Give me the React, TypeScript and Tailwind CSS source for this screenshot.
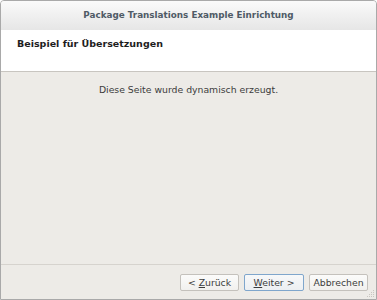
export default function App() {
  return (
    <div
      className="flex h-[300px] w-[377px] flex-col overflow-hidden rounded-t-[4px] border border-[#a9a9a9] bg-[#edebe7] text-[9.3px] text-[#2e3436]"
      style={{ fontFamily: '"DejaVu Sans", sans-serif' }}
    >
      {/* title bar */}
      <div className="flex h-[29px] shrink-0 items-center justify-center bg-gradient-to-b from-[#fafafa] to-[#e6e6e6] text-[8.8px] font-bold text-[#4f5b66]">
        Package Translations Example Einrichtung
      </div>
      {/* page header */}
      <div className="h-[42px] shrink-0 border-b border-[#c8c5c0] bg-white px-[16px] pt-[7px] text-[9.5px] font-bold text-[#1e1e1e]">
        Beispiel für Übersetzungen
      </div>
      {/* page body */}
      <div className="flex-1 pt-[11px] text-center text-[#3c3c3c]">
        Diese Seite wurde dynamisch erzeugt.
      </div>
      {/* buttons */}
      <div className="relative flex h-[35px] shrink-0 items-start justify-end gap-[5px] border-t border-[#d6d3ce] pt-[9px] pr-[8px]">
        <button className="h-[17px] w-[59px] rounded-[2px] border border-[#c4c1bc] bg-gradient-to-b from-[#fbfbfa] to-[#f1f0ee] leading-none text-[#3c3c3c]">
          &lt; <span className="underline">Z</span>urück
        </button>
        <button className="h-[17px] w-[60px] rounded-[2px] border border-[#7fa6cc] bg-gradient-to-b from-[#f7f8f9] to-[#eceff2] leading-none text-[#3c3c3c]">
          <span className="underline">W</span>eiter &gt;
        </button>
        <button className="h-[17px] w-[59px] rounded-[2px] border border-[#c4c1bc] bg-gradient-to-b from-[#fbfbfa] to-[#f1f0ee] leading-none text-[#3c3c3c]">
          Abbrechen
        </button>
        {/* resize grip */}
        <svg className="absolute bottom-[1px] right-[1px]" width="8" height="8" viewBox="0 0 8 8">
          <g fill="#c9c6c1">
            <rect x="6" y="0" width="1" height="1" />
            <rect x="4" y="2" width="1" height="1" />
            <rect x="6" y="2" width="1" height="1" />
            <rect x="2" y="4" width="1" height="1" />
            <rect x="4" y="4" width="1" height="1" />
            <rect x="6" y="4" width="1" height="1" />
            <rect x="0" y="6" width="1" height="1" />
            <rect x="2" y="6" width="1" height="1" />
            <rect x="4" y="6" width="1" height="1" />
            <rect x="6" y="6" width="1" height="1" />
          </g>
        </svg>
      </div>
    </div>
  );
}
